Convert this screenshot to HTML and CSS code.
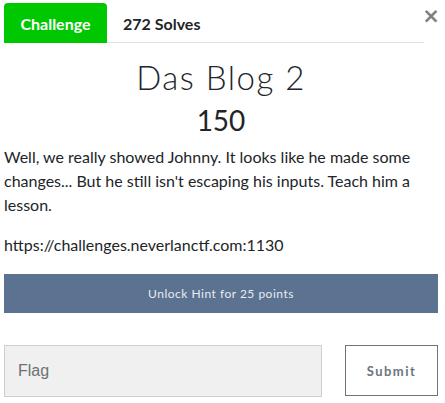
FILE: index.html
```html
<!DOCTYPE html>
<html>
<head>
<meta charset="utf-8">
<link rel="stylesheet" href="styles.css">
</head>
<body>
<div class="modal">
  <div class="header">
    <ul class="tabs">
      <li class="tab active">Challenge</li>
      <li class="tab">272 Solves</li>
    </ul>
    <button class="close">&times;</button>
  </div>
  <h2 class="title">Das Blog 2</h2>
  <h3 class="value">150</h3>
  <p class="desc">Well, we really showed Johnny. It looks like he made some changes... But he still isn't escaping his inputs. Teach him a lesson.</p>
  <p class="url">https://challenges.neverlanctf.com:1130</p>
  <button class="hint">Unlock Hint for 25 points</button>
  <div class="submit-row">
    <input class="flag" type="text" placeholder="Flag">
    <button class="submit">Submit</button>
  </div>
</div>
</body>
</html>
```
FILE: styles.css
```css
* { box-sizing: border-box; }
html, body { margin: 0; padding: 0; background: #fff; }
body { font-family: Lato, "Noto Sans", sans-serif; color: #212529; }
.modal { padding: 3px 7px 0 4px; }
.header { display: flex; align-items: flex-start; }
.tabs {
  list-style: none; margin: 0; padding: 0;
  display: flex; flex: 1;
  border-bottom: 1px solid #dee2e6;
}
.tab {
  height: 40px; margin-bottom: -1px;
  padding: 0 16px;
  display: flex; align-items: center;
  font-weight: 700; font-size: 16px; color: #212529;
}
.tab.active {
  background: #00c800; color: #fff;
  border-radius: 4px 4px 0 0;
  width: 103px; justify-content: center; padding: 0;
}
.close {
  border: 0; background: none; padding: 0;
  font-family: "DejaVu Sans", sans-serif; font-size: 21px; font-weight: 700;
  color: #808080; line-height: 1; margin-top: 3px; width: 14px;
  display: flex; justify-content: center;
}
.title {
  text-align: center; font-weight: 300; font-size: 33px;
  letter-spacing: 1.5px;
  margin: 14px 0 0; line-height: 40px;
}
.value {
  text-align: center; font-weight: 400; font-size: 28px;
  margin: 6px 0 0; line-height: 34px;
}
.desc { font-size: 16px; line-height: 24px; margin: 8px 0 0; }
.url { font-size: 16px; line-height: 24px; margin: 16px 0 0; }
.hint {
  display: block; width: 100%; height: 39px; margin-top: 17px;
  background: #5b7290; color: #e8ecf2; border: 0; border-radius: 0;
  font-family: Lato, sans-serif; font-size: 12px; letter-spacing: 0.5px;
}
.submit-row { display: flex; gap: 23px; margin-top: 32px; }
.flag {
  width: 318px; height: 52px; background: #f0f0f0;
  border: 1px solid #ccd0d5; border-radius: 0;
  padding: 0 13px; font-family: "Liberation Sans", Arial, sans-serif; font-size: 16px;
}
.flag::placeholder { color: #6c7075; }
.submit {
  flex: 1; height: 51px; background: #fff;
  border: 1px solid #6c757d; border-radius: 0;
  font-family: Lato, sans-serif; font-weight: 700; font-size: 13px;
  color: #6c757d; letter-spacing: 1.5px;
}
```
